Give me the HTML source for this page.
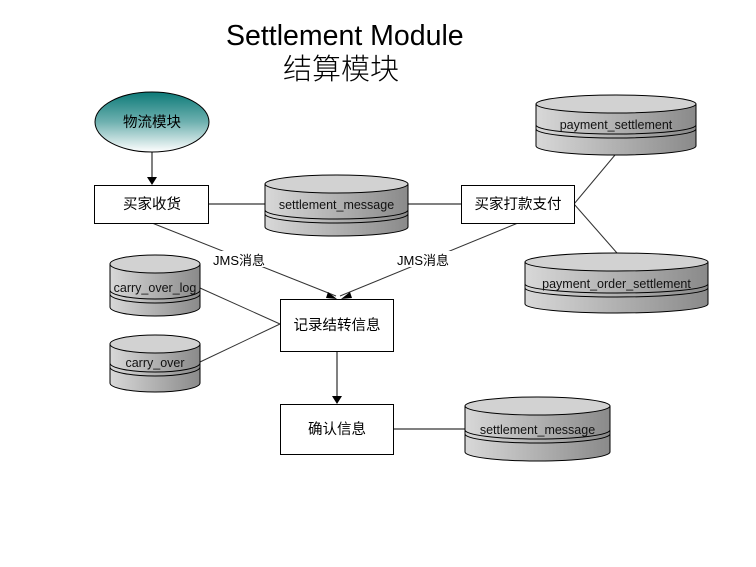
<!DOCTYPE html>
<html><head><meta charset="utf-8"><style>
html,body{margin:0;padding:0;background:#fff;width:756px;height:567px;overflow:hidden}
svg text{font-family:"Liberation Sans","Noto Sans CJK SC",sans-serif}
</style></head><body>
<svg width="756" height="567" viewBox="0 0 756 567" xmlns="http://www.w3.org/2000/svg">
<defs>
<linearGradient id="body" x1="0" x2="1" y1="0" y2="0"><stop offset="0" stop-color="#d8d8d8"/><stop offset="1" stop-color="#8a8a8a"/></linearGradient>
<linearGradient id="teal" x1="0" x2="0" y1="0" y2="1"><stop offset="0" stop-color="#0d7a78"/><stop offset="0.5" stop-color="#6fb1b0"/><stop offset="1" stop-color="#ffffff"/></linearGradient>
</defs>
<text x="226" y="45" font-size="28.5">Settlement Module</text>
<text x="283" y="79" font-size="29" font-weight="300">结算模块</text>

<g stroke="#333" stroke-width="1" fill="none">
<line x1="209" y1="204" x2="265" y2="204" stroke="#000"/>
<line x1="408" y1="204" x2="461" y2="204" stroke="#000"/>
<line x1="574" y1="204" x2="615" y2="155"/>
<line x1="574" y1="204" x2="617" y2="253"/>
<line x1="152" y1="223" x2="336" y2="296"/>
<line x1="518" y1="223" x2="340" y2="296"/>
<line x1="200" y1="288" x2="280" y2="324"/>
<line x1="200" y1="362" x2="280" y2="324"/>
<line x1="393" y1="429" x2="466" y2="429" stroke="#000"/>
</g>
<line x1="152" y1="152" x2="152" y2="177" stroke="#000"/>
<path d="M147,177 L157,177 L152,185 Z"/>
<line x1="337" y1="351" x2="337" y2="396" stroke="#000"/>
<path d="M332,396 L342,396 L337,404 Z"/>
<path d="M328,292 L337,299 L326,298 Z"/>
<path d="M350,292 L341,299 L352,298 Z"/>

<rect x="212" y="251" width="60" height="16" fill="#fff"/>
<text x="213" y="265" font-size="13">JMS消息</text>
<rect x="396" y="251" width="60" height="16" fill="#fff"/>
<text x="397" y="265" font-size="13">JMS消息</text>

<ellipse cx="152" cy="122" rx="57" ry="30" fill="url(#teal)" stroke="#000"/>
<text x="152" y="127" font-size="14.5" text-anchor="middle">物流模块</text>

<g fill="#fff" stroke="#000">
<rect x="94.5" y="185.5" width="114" height="38"/>
<rect x="461.5" y="185.5" width="113" height="38"/>
<rect x="280.5" y="299.5" width="113" height="52"/>
<rect x="280.5" y="404.5" width="113" height="50"/>
</g>
<g font-size="14.5" text-anchor="middle">
<text x="152" y="209">买家收货</text>
<text x="518" y="209">买家打款支付</text>
<text x="337" y="330">记录结转信息</text>
<text x="337" y="434">确认信息</text>
</g>

<g stroke="#000" stroke-width="1">
<path d="M265,184 L265,227 A71.5,9 0 0 0 408,227 L408,184 Z" fill="url(#body)"/>
<ellipse cx="336.5" cy="184" rx="71.5" ry="9" fill="#d2d2d2"/>
<path d="M265,210 A71.5,9 0 0 0 408,210 M265,214 A71.5,9 0 0 0 408,214" fill="none"/>

<path d="M536,104 L536,146 A80,9 0 0 0 696,146 L696,104 Z" fill="url(#body)"/>
<ellipse cx="616" cy="104" rx="80" ry="9" fill="#d2d2d2"/>
<path d="M536,125 A80,9 0 0 0 696,125 M536,129 A80,9 0 0 0 696,129" fill="none"/>

<path d="M525,262 L525,304 A91.5,9 0 0 0 708,304 L708,262 Z" fill="url(#body)"/>
<ellipse cx="616.5" cy="262" rx="91.5" ry="9" fill="#d2d2d2"/>
<path d="M525,284 A91.5,9 0 0 0 708,284 M525,288 A91.5,9 0 0 0 708,288" fill="none"/>

<path d="M110,264 L110,307 A45,9 0 0 0 200,307 L200,264 Z" fill="url(#body)"/>
<ellipse cx="155" cy="264" rx="45" ry="9" fill="#d2d2d2"/>
<path d="M110,290 A45,9 0 0 0 200,290 M110,294 A45,9 0 0 0 200,294" fill="none"/>

<path d="M110,344 L110,383 A45,9 0 0 0 200,383 L200,344 Z" fill="url(#body)"/>
<ellipse cx="155" cy="344" rx="45" ry="9" fill="#d2d2d2"/>
<path d="M110,363 A45,9 0 0 0 200,363 M110,367 A45,9 0 0 0 200,367" fill="none"/>

<path d="M465,406 L465,452 A72.5,9 0 0 0 610,452 L610,406 Z" fill="url(#body)"/>
<ellipse cx="537.5" cy="406" rx="72.5" ry="9" fill="#d2d2d2"/>
<path d="M465,430 A72.5,9 0 0 0 610,430 M465,434 A72.5,9 0 0 0 610,434" fill="none"/>
</g>
<g font-size="12.5" text-anchor="middle" fill="#111">
<text x="336.5" y="209">settlement_message</text>
<text x="616" y="129">payment_settlement</text>
<text x="616.5" y="288">payment_order_settlement</text>
<text x="155" y="292">carry_over_log</text>
<text x="155" y="367">carry_over</text>
<text x="537.5" y="434">settlement_message</text>
</g>
</svg>
</body></html>
